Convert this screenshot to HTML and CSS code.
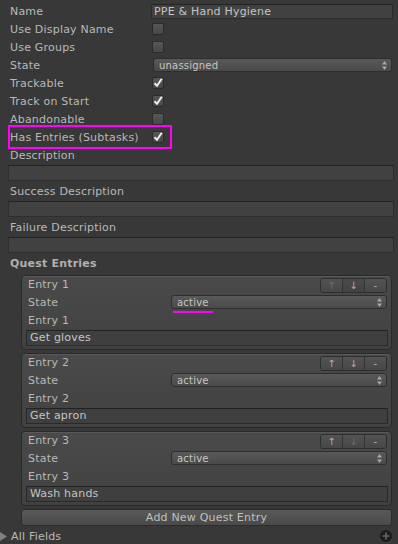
FILE: index.html
```html
<!DOCTYPE html>
<html lang="en">
<head>
    <meta charset="UTF-8">
    <title>Quest Inspector</title>
    <link rel="stylesheet" href="styles.css">
</head>
<body>
    <div class="row">
        <span class="label">Name</span>
        <div class="text-field">PPE &amp; Hand Hygiene</div>
    </div>
    <div class="row">
        <span class="label">Use Display Name</span>
        <span class="checkbox"></span>
    </div>
    <div class="row">
        <span class="label">Use Groups</span>
        <span class="checkbox"></span>
    </div>
    <div class="row">
        <span class="label">State</span>
        <div class="popup">unassigned
            <svg class="popup-arrow" viewBox="0 0 5 9" width="5" height="9"><polygon points="2.5,0 5,3.5 0,3.5"/><polygon points="0,5.5 5,5.5 2.5,9"/></svg>
        </div>
    </div>
    <div class="row">
        <span class="label">Trackable</span>
        <span class="checkbox"><svg viewBox="0 0 12 12" width="12" height="12"><path d="M2.5 6.3 L5 8.8 L9.8 1.8"/></svg></span>
    </div>
    <div class="row">
        <span class="label">Track on Start</span>
        <span class="checkbox"><svg viewBox="0 0 12 12" width="12" height="12"><path d="M2.5 6.3 L5 8.8 L9.8 1.8"/></svg></span>
    </div>
    <div class="row">
        <span class="label">Abandonable</span>
        <span class="checkbox"></span>
    </div>
    <div class="row">
        <span class="label">Has Entries (Subtasks)</span>
        <span class="checkbox"><svg viewBox="0 0 12 12" width="12" height="12"><path d="M2.5 6.3 L5 8.8 L9.8 1.8"/></svg></span>
        <span class="highlight"></span>
    </div>

    <div class="row">Description</div>
    <div class="field-row"><div class="wide-field"></div></div>
    <div class="row">Success Description</div>
    <div class="field-row"><div class="wide-field"></div></div>
    <div class="row">Failure Description</div>
    <div class="field-row"><div class="wide-field"></div></div>

    <div class="row heading">Quest Entries</div>

    <div class="entries">
        <div class="entry">
            <div class="entry-head">
                <span class="entry-name">Entry 1</span>
                <div class="arrows"><span class="dim">&#8593;</span><span class="pressed">&#8595;</span><span>-</span></div>
            </div>
            <div class="entry-row">
                <span class="entry-label">State</span>
                <div class="popup">active
                    <svg class="popup-arrow" viewBox="0 0 5 9" width="5" height="9"><polygon points="2.5,0 5,3.5 0,3.5"/><polygon points="0,5.5 5,5.5 2.5,9"/></svg>
                    <span class="underline"></span>
                </div>
            </div>
            <div class="entry-row">Entry 1</div>
            <div class="entry-field">Get gloves</div>
        </div>
        <div class="entry">
            <div class="entry-head">
                <span class="entry-name">Entry 2</span>
                <div class="arrows"><span>&#8593;</span><span>&#8595;</span><span>-</span></div>
            </div>
            <div class="entry-row">
                <span class="entry-label">State</span>
                <div class="popup">active
                    <svg class="popup-arrow" viewBox="0 0 5 9" width="5" height="9"><polygon points="2.5,0 5,3.5 0,3.5"/><polygon points="0,5.5 5,5.5 2.5,9"/></svg>
                </div>
            </div>
            <div class="entry-row">Entry 2</div>
            <div class="entry-field">Get apron</div>
        </div>
        <div class="entry">
            <div class="entry-head">
                <span class="entry-name">Entry 3</span>
                <div class="arrows"><span>&#8593;</span><span class="dim">&#8595;</span><span>-</span></div>
            </div>
            <div class="entry-row">
                <span class="entry-label">State</span>
                <div class="popup">active
                    <svg class="popup-arrow" viewBox="0 0 5 9" width="5" height="9"><polygon points="2.5,0 5,3.5 0,3.5"/><polygon points="0,5.5 5,5.5 2.5,9"/></svg>
                </div>
            </div>
            <div class="entry-row">Entry 3</div>
            <div class="entry-field">Wash hands</div>
        </div>
        <div class="add-button">Add New Quest Entry</div>
    </div>

    <div class="foldout">
        <svg class="fold-arrow" viewBox="0 0 8 9" width="8" height="9"><polygon points="0,0 7,4.5 0,9"/></svg>
        <span>All Fields</span>
        <svg class="plus" viewBox="0 0 12 12" width="12" height="12"><circle cx="6" cy="6" r="6"/><path d="M6 2.5 V9.5 M2.5 6 H9.5"/></svg>
    </div>
</body>
</html>
```

FILE: styles.css
```css
html {
    overflow: hidden;
}
body {
    margin: 0;
    padding-top: 2px;
    background-color: #383838;
    color: #b8b8b8;
    font-family: "DejaVu Sans", sans-serif;
    font-size: 11px;
    letter-spacing: 0.2px;
}
.row {
    position: relative;
    display: flex;
    align-items: center;
    height: 18px;
    padding-left: 10px;
    white-space: nowrap;
}
.label {
    width: 141px;
    flex: none;
}
.heading {
    font-weight: bold;
    color: #b0b0b0;
}
.text-field {
    flex: 1;
    height: 15px;
    margin-right: 5px;
    padding-left: 2px;
    box-sizing: border-box;
    line-height: 13px;
    color: #c4c4c4;
    background-color: #414141;
    border: 1px solid #2c2c2c;
    border-top-color: #232323;
}
.checkbox {
    position: relative;
    width: 12px;
    height: 12px;
    margin-left: 1px;
    box-sizing: border-box;
    border: 1px solid #2a2a2a;
    border-radius: 2px;
    background: linear-gradient(#575757, #474747);
}
.checkbox svg {
    position: absolute;
    left: -1px;
    top: -1px;
}
.checkbox path {
    fill: none;
    stroke: #eeeeee;
    stroke-width: 2;
}
.popup {
    position: relative;
    flex: 1;
    height: 14px;
    margin-left: 2px;
    margin-right: 6px;
    padding-left: 5px;
    box-sizing: border-box;
    display: flex;
    align-items: center;
    font-size: 10px;
    color: #c6c6c6;
    border: 1px solid #2e2e2e;
    border-radius: 3px;
    background: linear-gradient(#595959, #4a4a4a);
}
.popup-arrow {
    position: absolute;
    right: 4px;
    top: 2px;
    fill: #a8a8a8;
}
.highlight {
    position: absolute;
    left: 8px;
    top: -3px;
    width: 164px;
    height: 24px;
    box-sizing: border-box;
    border: 2px solid #ff00ff;
}
.underline {
    position: absolute;
    left: 1px;
    top: 15px;
    width: 40px;
    height: 2px;
    background-color: #ff00ff;
}
.field-row {
    height: 18px;
    display: flex;
    align-items: center;
}
.wide-field {
    flex: 1;
    height: 16px;
    margin: 0 4px 0 8px;
    box-sizing: border-box;
    background-color: #414141;
    border: 1px solid #2e2e2e;
    border-top-color: #222222;
}
.entries {
    margin: 3px 6px 0 21px;
}
.entry {
    margin-bottom: 3px;
    padding: 0 3px 3px 4px;
    border: 1px solid #2a2a2a;
    border-radius: 4px;
    background: linear-gradient(#4a4a4a, #414141);
    box-shadow: inset 0 1px #595959;
}
.entry-head {
    display: flex;
    align-items: center;
    height: 17px;
    padding-left: 2px;
}
.entry-name {
    flex: 1;
}
.arrows {
    display: flex;
    height: 15px;
    margin-right: 1px;
    margin-top: 1px;
    border: 1px solid #2e2e2e;
    border-radius: 3px;
    box-sizing: border-box;
    overflow: hidden;
}
.arrows span {
    width: 21px;
    display: flex;
    align-items: center;
    justify-content: center;
    font-size: 10px;
    color: #b0b0b0;
    background: linear-gradient(#535353, #474747);
    border-left: 1px solid #333333;
}
.arrows span:first-child {
    border-left: none;
}
.arrows .dim {
    color: #6e6e6e;
}
.arrows .pressed {
    background: linear-gradient(#4a4a4a, #434343);
}
.entry-row {
    display: flex;
    align-items: center;
    height: 18px;
    padding-left: 2px;
}
.entry-label {
    width: 143px;
    flex: none;
}
.entry-row .popup {
    margin-left: 0;
    margin-right: 1px;
}
.entry-field {
    height: 16px;
    margin-top: 1px;
    padding-left: 3px;
    box-sizing: border-box;
    line-height: 14px;
    color: #c4c4c4;
    background-color: #3f3f3f;
    border: 1px solid #2a2a2a;
    border-top-color: #222222;
}
.add-button {
    height: 17px;
    box-sizing: border-box;
    display: flex;
    align-items: center;
    justify-content: center;
    color: #c0c0c0;
    border: 1px solid #2c2c2c;
    border-radius: 3px;
    background: linear-gradient(#595959, #4a4a4a);
}
.foldout {
    display: flex;
    align-items: center;
    height: 16px;
    margin-top: 2px;
}
.fold-arrow {
    fill: #808080;
    margin-right: 3px;
}
.plus {
    margin-left: auto;
    margin-right: 6px;
}
.plus circle {
    fill: #1c1c1c;
}
.plus path {
    stroke: #5a5a5a;
    stroke-width: 2;
}
```
